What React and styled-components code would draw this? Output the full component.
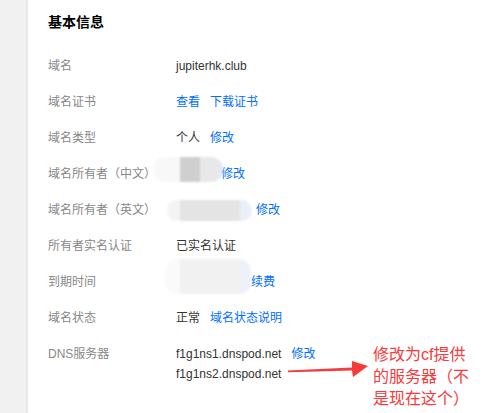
import styled, { createGlobalStyle } from 'styled-components';

const GlobalStyle = createGlobalStyle`
    html, body, #root {
        height: 100%;
    }
    body {
        margin: 0;
        background: #ffffff;
        font-family: "Liberation Sans", "Noto Sans CJK SC", sans-serif;
    }
`;

const rows = [
    { label: '域名', value: [{ text: 'jupiterhk.club' }] },
    { label: '域名证书', value: [{ text: '查看', link: true }, { text: '下载证书', link: true }] },
    { label: '域名类型', value: [{ text: '个人' }, { text: '修改', link: true }] },
    {
        label: '域名所有者（中文）',
        hidden: 45,
        smudge: { left: -23, top: -7, width: 70, height: 25, bg: 'linear-gradient(90deg, #f8f8f8 0 27px, #cfcfcf 27px 47px, #e8e8e8 47px 66px, #dfe7f8 66px)' },
        value: [{ text: '修改', link: true }],
    },
    {
        label: '域名所有者（英文）',
        hidden: 80,
        smudge: { left: -9, top: 0, width: 85, height: 21, bg: 'linear-gradient(90deg, #f4f4f4 0 13px, #e4e4e4 13px 73px, #ebeffa 73px)' },
        value: [{ text: '修改', link: true }],
    },
    { label: '所有者实名认证', value: [{ text: '已实名认证' }] },
    {
        label: '到期时间',
        hidden: 75,
        smudge: { left: -11, top: -13, width: 86, height: 35, bg: 'linear-gradient(90deg, #fafafa 0 15px, #f1f1f1 15px 75px, #edf1fb 75px)' },
        value: [{ text: '续费', link: true }],
    },
    { label: '域名状态', value: [{ text: '正常' }, { text: '域名状态说明', link: true }] },
];

const App = () => {
    return (
        <>
            <GlobalStyle />
            <Page>
                <Sidebar />
                <Panel>
                    <Title>基本信息</Title>
                    <InfoList>
                        {rows.map((row) => (
                            <Row key={row.label}>
                                <Label>{row.label}</Label>
                                <Value>
                                    {row.hidden && <Hidden $w={row.hidden} />}
                                    {row.value.map((v) =>
                                        v.link ? <Link key={v.text}>{v.text}</Link> : <span key={v.text}>{v.text}</span>
                                    )}
                                    {row.smudge && (
                                        <Smudge
                                            $left={row.smudge.left}
                                            $top={row.smudge.top}
                                            $w={row.smudge.width}
                                            $h={row.smudge.height}
                                            $bg={row.smudge.bg}
                                        />
                                    )}
                                </Value>
                            </Row>
                        ))}
                        <Row>
                            <Label>DNS服务器</Label>
                            <Value>
                                <NsList>
                                    <span>f1g1ns1.dnspod.net</span>
                                    <span>f1g1ns2.dnspod.net</span>
                                </NsList>
                                <Link>修改</Link>
                                <Annotation>
                                    <Arrow width="84" height="22" viewBox="0 0 84 22">
                                        <polygon
                                            points="2,13.4 66,10.6 66,4 82,9 67,20 66,13.6 2,15.2"
                                            fill="#f73a3a"
                                        />
                                    </Arrow>
                                    <Note>
                                        修改为cf提供
                                        <br />
                                        的服务器（不
                                        <br />
                                        是现在这个）
                                    </Note>
                                </Annotation>
                            </Value>
                        </Row>
                    </InfoList>
                </Panel>
            </Page>
        </>
    );
};

const Page = styled.div`
    display: flex;
    height: 100%;
    min-height: 413px;
`;

const Sidebar = styled.div`
    width: 26px;
    flex-shrink: 0;
    background: #f1f1f1;
    border-right: 2px solid #e7e7e7;
`;

const Panel = styled.main`
    flex: 1;
    background: #ffffff;
    padding: 12px 0 0 20px;
`;

const Title = styled.h3`
    margin: 0;
    font-size: 14px;
    line-height: 20px;
    font-weight: 700;
    color: #000000;
`;

const InfoList = styled.div`
    margin-top: 24px;
    display: flex;
    flex-direction: column;
    gap: 16px;
    font-size: 12px;
    line-height: 20px;
`;

const Row = styled.div`
    display: grid;
    grid-template-columns: 128px 1fr;
`;

const Label = styled.div`
    color: #888888;
    white-space: nowrap;
`;

const Value = styled.div`
    position: relative;
    display: flex;
    align-items: flex-start;
    gap: 10px;
    color: #333333;
    white-space: nowrap;
`;

const Link = styled.span`
    color: #006eff;
    cursor: pointer;
`;

const Hidden = styled.span`
    display: inline-block;
    width: ${(p) => p.$w}px;
    margin-right: -10px;
`;

const Smudge = styled.div`
    position: absolute;
    left: ${(p) => p.$left}px;
    top: ${(p) => p.$top}px;
    width: ${(p) => p.$w}px;
    height: ${(p) => p.$h}px;
    background: ${(p) => p.$bg};
    border-radius: 12px;
    filter: blur(1px);
`;

const NsList = styled.div`
    display: flex;
    flex-direction: column;
`;

const Annotation = styled.div`
    position: absolute;
    left: 110px;
    top: 0;
    display: flex;
    align-items: flex-start;
    gap: 3px;
`;

const Arrow = styled.svg`
    margin-top: 13px;
    flex-shrink: 0;
`;

const Note = styled.div`
    font-size: 16px;
    line-height: 22px;
    color: #f73a3a;
    white-space: nowrap;
`;

export default App;
